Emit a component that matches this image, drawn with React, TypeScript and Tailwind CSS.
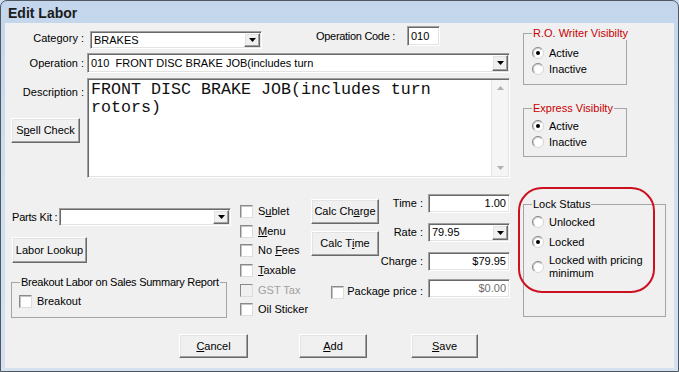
import React from 'react';

const sunken =
  'border border-t-[#a0a0a0] border-l-[#a0a0a0] border-r-white border-b-white shadow-[inset_1px_1px_0_#696969,inset_-1px_-1px_0_#e3e3e3]';
const raised =
  'border border-t-white border-l-white border-r-[#696969] border-b-[#696969] bg-[#f0f0f0] shadow-[inset_-1px_-1px_0_#a0a0a0,inset_1px_1px_0_#e3e3e3]';

const Hotkey: React.FC<{ text: string; at: number }> = ({ text, at }) => (
  <>
    {text.slice(0, at)}
    <span className="underline underline-offset-[1px]">{text[at]}</span>
    {text.slice(at + 1)}
  </>
);

const Btn: React.FC<{ className: string; children: React.ReactNode }> = ({ className, children }) => (
  <div className={`${raised} flex items-center justify-center ${className}`}>{children}</div>
);

const Combo: React.FC<{ className: string; value?: string }> = ({ className, value }) => (
  <div className={`${sunken} flex bg-white p-[1px] ${className}`}>
    <div className="flex-1 flex items-center pl-[2px] whitespace-pre overflow-hidden">{value}</div>
    <div className={`${raised} w-[16px] flex items-center justify-center`}>
      <svg width="7" height="4" viewBox="0 0 7 4">
        <path d="M0 0h7L3.5 4z" fill="#000" />
      </svg>
    </div>
  </div>
);

const Field: React.FC<{ className: string; value: string; muted?: boolean }> = ({ className, value, muted }) => (
  <div
    className={`${sunken} bg-white flex items-center justify-end pr-[3px] ${muted ? 'text-[#6d6d6d]' : ''} ${className}`}
  >
    {value}
  </div>
);

const Box: React.FC<{ disabled?: boolean }> = ({ disabled }) => (
  <span
    className={`block w-[13px] h-[13px] shrink-0 border border-t-[#8a8a8a] border-l-[#8a8a8a] border-r-[#dcdcdc] border-b-[#dcdcdc] ${
      disabled ? 'bg-[#f0f0f0]' : 'bg-white shadow-[inset_1px_1px_0_#c4c4c4]'
    }`}
  />
);

const Radio: React.FC<{ checked?: boolean }> = ({ checked }) => (
  <svg width="12" height="12" viewBox="0 0 12 12" className="shrink-0">
    <circle cx="6" cy="6" r="5.5" fill="#fff" stroke="#d4d4d4" />
    <path d="M2.1 9.9A5.5 5.5 0 0 1 9.9 2.1" fill="none" stroke="#8c8c8c" />
    <path d="M2.8 9.2A4.5 4.5 0 0 1 9.2 2.8" fill="none" stroke="#c4c4c4" />
    {checked && <circle cx="6" cy="6" r="2" fill="#000" />}
  </svg>
);

const Group: React.FC<{ title: string; titleClass?: string; className: string; children: React.ReactNode }> = ({
  title,
  titleClass = '',
  className,
  children,
}) => (
  <fieldset className={`border border-[#a5a5a5] px-[8px] m-0 min-w-0 ${className}`}>
    <legend className={`px-[1px] text-[11px] leading-[13px] whitespace-nowrap ${titleClass}`}>{title}</legend>
    {children}
  </fieldset>
);

const RadioRow: React.FC<{ label: React.ReactNode; checked?: boolean; className?: string }> = ({
  label,
  checked,
  className = '',
}) => (
  <div className={`flex items-center gap-[5px] ${className}`}>
    <Radio checked={checked} />
    <span>{label}</span>
  </div>
);

const App: React.FC = () => {
  const flags = [
    { text: 'Sublet', at: 1 },
    { text: 'Menu', at: 0 },
    { text: 'No Fees', at: 3 },
    { text: 'Taxable', at: 0 },
    { text: 'GST Tax', at: -1, disabled: true },
    { text: 'Oil Sticker', at: -1 },
  ];

  const amounts = [
    { label: 'Time :', value: '1.00' },
    { label: 'Rate :', value: '79.95', combo: true },
    { label: 'Charge :', value: '$79.95' },
  ];

  return (
    <div className="w-[679px] h-[372px] overflow-hidden bg-[#cddcee] font-['Liberation_Sans',Arial,sans-serif] text-[11px] leading-[13px] text-black">
      <div className="w-full h-full border border-[#4f5861] rounded-t-[7px] flex flex-col bg-gradient-to-b from-[#c3d6eb] via-[#cfdff0] to-[#d3e1f1]">
        {/* title bar */}
        <div className="h-[22px] shrink-0 flex items-center pl-[7px] pt-[1px]">
          <span className="text-[14px] leading-[16px] font-bold text-[#1b1b1b]">Edit Labor</span>
        </div>

        {/* body */}
        <div className="mx-[4px] h-[345px] bg-[#f0f0f0] flex flex-col">
          <div className="h-[311px] flex">
            {/* left part */}
            <div className="w-[512px] flex flex-col">
              <div className="mt-[3px] h-[21px] flex items-start">
                <span className="w-[79px] text-right mt-[6px]">Category :</span>
                <Combo className="ml-[6px] mt-[5px] w-[172px] h-[18px]" value="BRAKES" />
                <span className="ml-[45px] w-[88px] text-right mt-[4px] whitespace-nowrap tracking-[-0.3px]">
                  Operation Code :
                </span>
                <div className={`${sunken} bg-white ml-[12px] w-[33px] h-[20px] flex items-center pl-[3px]`}>010</div>
              </div>

              <div className="mt-[6px] h-[20px] flex items-center">
                <span className="w-[79px] text-right">Operation :</span>
                <Combo className="ml-[3px] w-[423px] h-[20px]" value="010  FRONT DISC BRAKE JOB(includes turn" />
              </div>

              <div className="mt-[5px] flex">
                <div className="w-[82px] flex flex-col">
                  <span className="w-[79px] text-right mt-[8px]">Description :</span>
                  <Btn className="ml-[6px] mt-[19px] w-[69px] h-[25px]">
                    <Hotkey text="Spell Check" at={1} />
                  </Btn>
                </div>
                <div className={`${sunken} bg-white w-[423px] h-[100px] flex p-[1px]`}>
                  <div className="flex-1 pl-[2px] pt-[1px] font-['Liberation_Mono','Courier_New',monospace] text-[16.67px] leading-[18px] whitespace-pre text-[#111]">
                    <div>FRONT DISC BRAKE JOB(includes turn</div>
                    <div>rotors)</div>
                  </div>
                  <div className="w-[17px] bg-[#f5f5f5] border-l border-[#e6e6e6] flex flex-col items-center justify-between py-[6px]">
                    <svg width="7" height="4" viewBox="0 0 7 4">
                      <path d="M0 4h7L3.5 0z" fill="#b0b0b0" />
                    </svg>
                    <svg width="7" height="4" viewBox="0 0 7 4">
                      <path d="M0 0h7L3.5 4z" fill="#b0b0b0" />
                    </svg>
                  </div>
                </div>
              </div>

              {/* lower section */}
              <div className="flex">
                <div className="w-[226px] flex flex-col">
                  <div className="mt-[30px] h-[18px] flex items-center">
                    <span className="w-[54px] pl-[7px] whitespace-nowrap tracking-[-0.2px]">Parts Kit :</span>
                    <Combo className="w-[172px] h-[18px]" />
                  </div>
                  <Btn className="mt-[11px] ml-[7px] w-[75px] h-[26px]">Labor Lookup</Btn>
                  <Group
                    title="Breakout Labor on Sales Summary Report"
                    titleClass="tracking-[-0.25px]"
                    className="mt-[13px] ml-[6px] w-[216px] h-[42px]"
                  >
                    <div className="mt-[6px] flex items-center gap-[5px] -ml-[1px]">
                      <Box />
                      <span>Breakout</span>
                    </div>
                  </Group>
                </div>

                <div className="ml-[9px] w-[71px] pt-[24px] flex flex-col">
                  {flags.map((f) => (
                    <div key={f.text} className="h-[19.6px] flex items-center gap-[5px]">
                      <Box disabled={f.disabled} />
                      <span className={f.disabled ? 'text-[#a0a0a0]' : ''}>
                        {f.at >= 0 ? <Hotkey text={f.text} at={f.at} /> : f.text}
                      </span>
                    </div>
                  ))}
                </div>

                <div className="w-[199px] flex flex-col">
                  <div className="flex">
                    <div className="w-[68px] flex flex-col">
                      <Btn className="mt-[21px] w-[68px] h-[25px]">
                        <Hotkey text="Calc Charge" at={7} />
                      </Btn>
                      <Btn className="mt-[7px] w-[68px] h-[25px]">
                        <Hotkey text="Calc Time" at={6} />
                      </Btn>
                    </div>
                    <div className="flex-1 flex flex-col pt-[6px]">
                      {amounts.map((a) => (
                        <div key={a.label} className="mt-[10px] h-[19px] flex items-center">
                          <span className="flex-1 text-right pr-[5px]">{a.label}</span>
                          {a.combo ? (
                            <Combo className="w-[82px] h-[19px]" value={a.value} />
                          ) : (
                            <Field className="w-[82px] h-[19px]" value={a.value} />
                          )}
                        </div>
                      ))}
                    </div>
                  </div>
                  <div className="mt-[8px] h-[19px] flex items-start">
                    <span className="ml-[20px] mt-[7px]">
                      <Box />
                    </span>
                    <span className="flex-1 text-right pr-[5px] mt-[6px]">Package price :</span>
                    <Field className="w-[82px] h-[19px]" value="$0.00" muted />
                  </div>
                </div>
              </div>
            </div>

            {/* right part */}
            <div className="flex-1 flex flex-col pl-[6px]">
              <Group title="R.O. Writer Visibilty" titleClass="text-[#c80000]" className="mt-[4px] w-[104px] h-[58px]">
                <RadioRow className="mt-[5px] h-[16px]" label="Active" checked />
                <RadioRow className="h-[16px]" label="Inactive" />
              </Group>
              <Group title="Express Visibilty" titleClass="text-[#c80000]" className="mt-[17px] w-[104px] h-[55px]">
                <RadioRow className="mt-[3px] h-[16px]" label="Active" checked />
                <RadioRow className="h-[16px]" label="Inactive" />
              </Group>
              <div className="relative mt-[41px] w-[143px] h-[119px]">
                <Group title="Lock Status" className="w-[143px] h-[119px]">
                  <RadioRow className="mt-[3px] h-[16px]" label="Unlocked" />
                  <RadioRow className="mt-[4px] h-[16px]" label="Locked" checked />
                  <RadioRow
                    className="mt-[4px]"
                    label={
                      <>
                        Locked with pricing
                        <br />
                        minimum
                      </>
                    }
                  />
                </Group>
                {/* annotation */}
                <div className="absolute left-[-5px] top-[-11px] w-[137px] h-[106px] border-2 border-[#cc1020] rounded-[24px] pointer-events-none" />
              </div>
            </div>
          </div>

          {/* bottom buttons */}
          <div className="flex">
            <Btn className="ml-[174px] w-[69px] h-[24px]">
              <Hotkey text="Cancel" at={0} />
            </Btn>
            <Btn className="ml-[51px] w-[68px] h-[24px]">
              <Hotkey text="Add" at={0} />
            </Btn>
            <Btn className="ml-[44px] w-[67px] h-[24px]">
              <Hotkey text="Save" at={0} />
            </Btn>
          </div>
        </div>
      </div>
    </div>
  );
};

export default App;
